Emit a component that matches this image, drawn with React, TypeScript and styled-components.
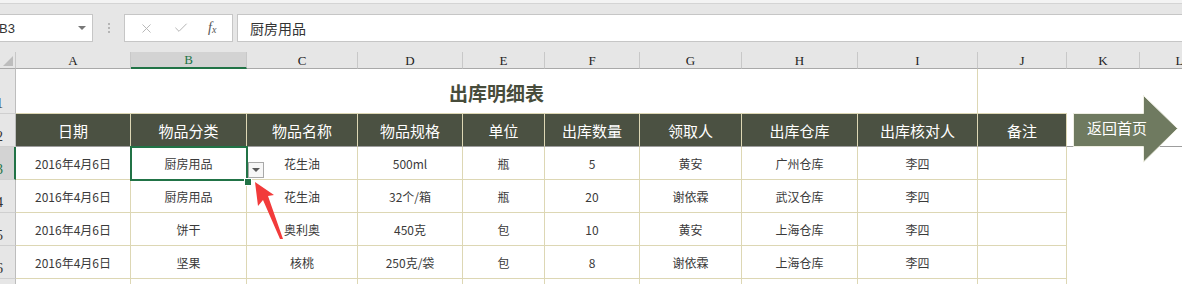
import React from 'react';
import styled, { createGlobalStyle, css } from 'styled-components';
import { X, Check } from 'lucide-react';

const GlobalStyle = createGlobalStyle`
	html, body {
		margin: 0;
		padding: 0;
		background: #ffffff;
		overflow: hidden;
	}
	body {
		font-family: "Noto Sans CJK SC", "Noto Sans", sans-serif;
	}
`;

const COL_WIDTHS = [16, 115, 116, 111, 105, 82, 95, 102, 116, 120, 89, 73, 80];
const LETTERS = ['A', 'B', 'C', 'D', 'E', 'F', 'G', 'H', 'I', 'J', 'K', 'L'];
const HEADERS = ['日期', '物品分类', '物品名称', '物品规格', '单位', '出库数量', '领取人', '出库仓库', '出库核对人', '备注'];
const ROWS = [
	['2016年4月6日', '厨房用品', '花生油', '500ml', '瓶', '5', '黄安', '广州仓库', '李四', ''],
	['2016年4月6日', '厨房用品', '花生油', '32个/箱', '瓶', '20', '谢依霖', '武汉仓库', '李四', ''],
	['2016年4月6日', '饼干', '奥利奥', '450克', '包', '10', '黄安', '上海仓库', '李四', ''],
	['2016年4月6日', '坚果', '核桃', '250克/袋', '包', '8', '谢依霖', '上海仓库', '李四', ''],
	['', '', '', '', '', '', '', '', '', ''],
];

const GREEN = '#217346';
const OLIVE = '#4b5142';
const CREAM = '#ddd7b4';

const Page = styled.div`
	width: 1182px;
	height: 284px;
	display: flex;
	flex-direction: column;
	background: #e6e6e6;
	overflow: hidden;

	& > * {
		flex-shrink: 0;
	}
`;

const TopStrip = styled.div`
	height: 3px;
	background: #f3f3f3;
	border-bottom: 1px solid #d4d4d4;
	margin-bottom: 10px;
`;

const FormulaBar = styled.div`
	height: 28px;
	display: flex;
	align-items: stretch;
	margin-bottom: 10px;
`;

const NameBox = styled.div`
	width: 93px;
	box-sizing: border-box;
	background: #ffffff;
	border: 1px solid #c6c6c6;
	border-left: none;
	display: flex;
	align-items: center;
	justify-content: space-between;
	padding-right: 6px;
	font-family: "Liberation Sans", "Noto Sans", sans-serif;
	font-size: 13px;
	color: #333;

	span:first-child {
		margin-left: -1px;
	}
`;

const Caret = styled.span`
	width: 0;
	height: 0;
	border-left: 4px solid transparent;
	border-right: 4px solid transparent;
	border-top: 4px solid #777;
`;

const Grip = styled.div`
	width: 31px;
	display: flex;
	flex-direction: column;
	align-items: center;
	justify-content: center;
	gap: 2px;

	span {
		width: 2px;
		height: 2px;
		background: #b5b5b5;
	}
`;

const FxBox = styled.div`
	width: 109px;
	box-sizing: border-box;
	background: #ffffff;
	border: 1px solid #c6c6c6;
	display: flex;
	align-items: center;
	justify-content: space-around;
	padding: 0 6px 0 4px;
	margin-right: 4px;
	color: #b4b4b4;
`;

const Fx = styled.span`
	font-family: "Liberation Serif", serif;
	font-style: italic;
	font-size: 14px;
	color: #555;

	sub {
		font-size: 10px;
		vertical-align: -1px;
	}
`;

const FormulaInput = styled.div`
	flex: 1;
	background: #ffffff;
	border-top: 1px solid #c6c6c6;
	border-bottom: 1px solid #c6c6c6;
	border-left: 1px solid #c6c6c6;
	display: flex;
	align-items: center;
	padding-left: 12px;
	font-size: 14px;
	color: #333;
`;

const Sheet = styled.div`
	position: relative;
	display: grid;
	grid-template-columns: ${COL_WIDTHS.map((w) => `${w}px`).join(' ')};
	grid-template-rows: 17px 45px 33px 33px 33px 33px 33px 33px;
	background: #ffffff;
`;

type Kind = 'corner' | 'colhead' | 'rowhead' | 'title' | 'head' | 'data' | 'blank' | 'headblank' | 'titleside';

const Cell = styled.div<{ $kind: Kind; $active?: boolean }>`
	box-sizing: border-box;
	display: flex;
	align-items: center;
	justify-content: center;
	overflow: hidden;
	white-space: nowrap;
	font-size: 12px;
	color: #3a3a3a;

	${({ $kind, $active }) => {
		switch ($kind) {
			case 'corner':
				return css`
					background: #e6e6e6;
					border-right: 1px solid #c8c8c8;
					border-bottom: 1px solid #a9a9a9;
					align-items: flex-end;
					justify-content: flex-end;
					padding: 0 2px 2px 0;
				`;
			case 'colhead':
				return css`
					background: ${$active ? '#d3d3d3' : '#e6e6e6'};
					color: ${$active ? GREEN : '#222'};
					border-right: 1px solid #c8c8c8;
					border-bottom: ${$active ? `2px solid ${GREEN}` : '1px solid #a9a9a9'};
					font-family: "Liberation Serif", serif;
					font-size: 13px;
					padding-top: 1px;
				`;
			case 'rowhead':
				return css`
					background: ${$active ? '#d3d3d3' : '#e6e6e6'};
					color: ${$active ? GREEN : '#333'};
					border-right: ${$active ? `2px solid ${GREEN}` : '1px solid #bdbdbd'};
					border-bottom: 1px solid #cfcfcf;
					font-family: "Liberation Serif", serif;
					font-size: 14px;
					align-items: flex-end;
					justify-content: flex-start;
					padding-bottom: 1px;

					span {
						margin-left: -4px;
					}
				`;
			case 'title':
				return css`
					grid-column: 2 / span 9;
					border-right: 1px solid ${CREAM};
					border-bottom: 1px solid ${CREAM};
					font-size: 19px;
					font-weight: bold;
					color: #474c3b;
					padding-top: 2px;
				`;
			case 'titleside':
				return css`
					border-bottom: 1px solid ${CREAM};
				`;
			case 'head':
				return css`
					background: ${OLIVE};
					color: #ffffff;
					border-right: 1px solid ${CREAM};
					border-bottom: 1px solid #9d9d9d;
					font-size: 15px;
				`;
			case 'headblank':
				return css`
					border-bottom: 1px solid #9d9d9d;
				`;
			case 'data':
				return css`
					border-right: 1px solid ${CREAM};
					border-bottom: 1px solid ${CREAM};
				`;
			default:
				return css``;
		}
	}}
`;

const Selection = styled.div`
	position: absolute;
	left: 130px;
	top: 94px;
	width: 118px;
	height: 35px;
	box-sizing: border-box;
	border: 2px solid ${GREEN};
	pointer-events: none;
`;

const FillHandle = styled.div`
	position: absolute;
	left: 244px;
	top: 126px;
	width: 6px;
	height: 6px;
	background: ${GREEN};
	border: 1px solid #ffffff;
`;

const DropButton = styled.div`
	position: absolute;
	left: 248px;
	top: 110px;
	width: 16px;
	height: 16px;
	box-sizing: border-box;
	border: 1px solid #a9a9a9;
	background: #f7f7f7;
	display: flex;
	align-items: center;
	justify-content: center;

	&::after {
		content: '';
		border-left: 4px solid transparent;
		border-right: 4px solid transparent;
		border-top: 4px solid #595959;
	}
`;

const Pointer = styled.svg`
	position: absolute;
	left: 245px;
	top: 123px;
`;

const ShapeButton = styled.div`
	position: absolute;
	left: 1070px;
	top: 42px;
	width: 112px;
	height: 70px;
`;

const ShapeLabel = styled.span`
	position: absolute;
	left: 17px;
	top: 24px;
	font-size: 15px;
	color: #ffffff;
	line-height: 20px;
`;

export default function App(): JSX.Element {
	return (
		<>
			<GlobalStyle />
			<Page>
				<TopStrip />
				<FormulaBar>
					<NameBox>
						<span>B3</span>
						<Caret />
					</NameBox>
					<Grip>
						<span />
						<span />
						<span />
					</Grip>
					<FxBox>
						<X size={15} strokeWidth={1.5} />
						<Check size={16} strokeWidth={1.5} />
						<Fx>
							f<sub>x</sub>
						</Fx>
					</FxBox>
					<FormulaInput>厨房用品</FormulaInput>
				</FormulaBar>
				<Sheet>
					<Cell $kind='corner'>
						<svg width='10' height='10' viewBox='0 0 10 10'>
							<polygon points='10,0 10,10 0,10' fill='#bdbdbd' />
						</svg>
					</Cell>
					{LETTERS.map((l) => (
						<Cell key={l} $kind='colhead' $active={l === 'B'}>
							{l}
						</Cell>
					))}

					<Cell $kind='rowhead'>
						<span>1</span>
					</Cell>
					<Cell $kind='title'>出库明细表</Cell>
					<Cell $kind='titleside' />
					<Cell $kind='blank' />
					<Cell $kind='blank' />

					<Cell $kind='rowhead'>
						<span>2</span>
					</Cell>
					{HEADERS.map((h) => (
						<Cell key={h} $kind='head'>
							{h}
						</Cell>
					))}
					<Cell $kind='headblank' />
					<Cell $kind='headblank' />

					{ROWS.map((row, r) => (
						<React.Fragment key={r}>
							<Cell $kind='rowhead' $active={r === 0}>
								<span>{r + 3}</span>
							</Cell>
							{row.map((v, c) => (
								<Cell key={c} $kind='data'>
									{v}
								</Cell>
							))}
							<Cell $kind='blank' />
							<Cell $kind='blank' />
						</React.Fragment>
					))}

					<Selection />
					<FillHandle />
					<DropButton />
					<Pointer width='45' height='70' viewBox='0 0 45 70'>
						<polygon points='10,7 29,20 23,21 38,64 35,64 18,25 13,31' fill='#f23b3b' />
					</Pointer>
					<ShapeButton>
						<svg width='112' height='70' viewBox='0 0 112 70'>
							<polygon
								points='3.5,19.5 73.5,19.5 73.5,1.5 107.5,34.5 73.5,68 73.5,52.5 3.5,52.5'
								fill='#6f7a60'
								stroke='#eeeee2'
								strokeWidth='1'
							/>
						</svg>
						<ShapeLabel>返回首页</ShapeLabel>
					</ShapeButton>
				</Sheet>
			</Page>
		</>
	);
}
